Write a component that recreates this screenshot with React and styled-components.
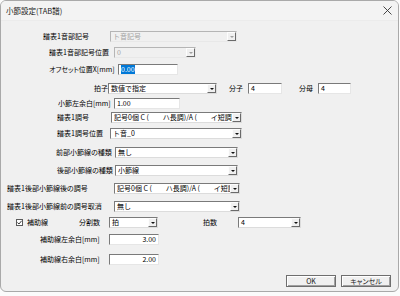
import styled, { createGlobalStyle } from "styled-components";

const GlobalStyle = createGlobalStyle`
  html, body {
    margin: 0;
    padding: 0;
    background: #fbfbfb;
  }
  body {
    font-family: "Noto Sans CJK JP", "Noto Sans", sans-serif;
  }
`;

const Window = styled.div`
  width: 397px;
  height: 290px;
  border: 1px solid #a9a9a9;
  border-radius: 6px;
  background: #f0f0f0;
  overflow: hidden;
  display: flex;
  flex-direction: column;
  font-size: 7px;
  font-feature-settings: "palt";
  color: #000;
`;

const TitleBar = styled.div`
  height: 19px;
  flex: none;
  display: flex;
  align-items: center;
  justify-content: space-between;
  padding: 0 6px 0 5px;
  background: #f3f3f3;
  border-bottom: 1px solid #ebebeb;
  color: #1a1a1a;
  font-size: 7.5px;
`;

const Client = styled.div`
  display: flex;
  flex-direction: column;
`;

const Row = styled.div`
  display: flex;
  align-items: center;
  height: 11px;
  margin-top: ${(p) => p.$gap}px;
  padding-left: ${(p) => p.$x}px;
`;

const Label = styled.span`
  flex: none;
  width: ${(p) => p.$w}px;
  margin-left: ${(p) => p.$ml || 0}px;
  white-space: nowrap;
  line-height: 11px;
`;

const Combo = styled.div`
  flex: none;
  box-sizing: border-box;
  width: ${(p) => p.$w}px;
  height: 11px;
  display: flex;
  align-items: center;
  background: ${(p) => (p.$disabled ? "#f0f0f0" : "#fff")};
  border: 1px solid;
  border-color: ${(p) =>
    p.$disabled ? "#b5b5b5 #e8e8e8 #e8e8e8 #b5b5b5" : "#7a7a7a #dcdcdc #dcdcdc #7a7a7a"};
  color: ${(p) => (p.$disabled ? "#a3a3a3" : "#000")};
`;

const ComboText = styled.span`
  flex: 1;
  overflow: hidden;
  white-space: pre;
  padding-left: 2px;
  line-height: 9px;
  font-feature-settings: normal;
`;

const DropBtn = styled.span`
  flex: none;
  box-sizing: border-box;
  width: 9px;
  height: 9px;
  display: flex;
  align-items: center;
  justify-content: center;
  background: #f0f0f0;
  border: 1px solid;
  border-color: #fdfdfd #6a6a6a #6a6a6a #fdfdfd;
  &::after {
    content: "";
    border-left: 2px solid transparent;
    border-right: 2px solid transparent;
    border-top: 2px solid ${(p) => (p.$disabled ? "#a0a0a0" : "#111")};
  }
`;

const Input = styled.div`
  flex: none;
  box-sizing: border-box;
  width: ${(p) => p.$w}px;
  height: 11px;
  padding: 0 2px;
  background: #fff;
  border: 1px solid;
  border-color: #7a7a7a #e6e6e6 #e6e6e6 #7a7a7a;
  text-align: ${(p) => p.$align || "left"};
  line-height: 9px;
  white-space: nowrap;
  overflow: hidden;
`;

const Selected = styled.span`
  background: #0078d7;
  color: #fff;
`;

const Check = styled.span`
  flex: none;
  box-sizing: border-box;
  width: 7px;
  height: 7px;
  background: #fff;
  border: 1px solid #5a5a5a;
  display: flex;
  align-items: center;
  justify-content: center;
`;

const ButtonRow = styled.div`
  display: flex;
  justify-content: flex-end;
  gap: 5px;
  margin-top: 10px;
  padding-right: 7px;
`;

const Button = styled.div`
  box-sizing: border-box;
  width: 50px;
  height: 12px;
  display: flex;
  align-items: center;
  justify-content: center;
  background: #f0f0f0;
  border: 1px solid #6e6e6e;
  box-shadow: inset 1px 1px 0 #fff, inset -1px -1px 0 #a0a0a0;
  color: #222;
`;

const CloseIcon = () => (
  <svg width="9" height="9" viewBox="0 0 9 9">
    <path d="M0.5 0.5 L8.5 8.5 M8.5 0.5 L0.5 8.5" stroke="#333" strokeWidth="0.9" />
  </svg>
);

const Drop = ({ w, text, disabled }) => (
  <Combo $w={w} $disabled={disabled}>
    <ComboText>{text}</ComboText>
    <DropBtn $disabled={disabled} />
  </Combo>
);

const KEY_SIG = "記号0個 C (　　ハ長調)/A (　　イ短調)";

export default function App() {
  return (
    <>
      <GlobalStyle />
      <Window>
        <TitleBar>
          <span>小節設定(TAB譜)</span>
          <CloseIcon />
        </TitleBar>
        <Client>
          <Row $gap={10} $x={42}>
            <Label $w={67}>譜表1音部記号</Label>
            <Drop w={127} text="ト音記号" disabled />
          </Row>
          <Row $gap={5} $x={48}>
            <Label $w={65}>譜表1音部記号位置</Label>
            <Drop w={82} text="0" disabled />
          </Row>
          <Row $gap={6} $x={48}>
            <Label $w={69}>オフセット位置X[mm]</Label>
            <Input $w={60}>
              <Selected>0.00</Selected>
            </Input>
          </Row>
          <Row $gap={8} $x={93}>
            <Label $w={14}>拍子</Label>
            <Drop w={109} text="数値で指定" />
            <Label $ml={12} $w={19}>分子</Label>
            <Input $w={34}>4</Input>
            <Label $ml={17} $w={19}>分母</Label>
            <Input $w={33}>4</Input>
          </Row>
          <Row $gap={4} $x={57}>
            <Label $w={56}>小節左余白[mm]</Label>
            <Input $w={66}>1.00</Input>
          </Row>
          <Row $gap={3} $x={56}>
            <Label $w={54}>譜表1調号</Label>
            <Drop w={131} text={KEY_SIG} />
          </Row>
          <Row $gap={5} $x={56}>
            <Label $w={53}>譜表1調号位置</Label>
            <Drop w={132} text="ト音_0" />
          </Row>
          <Row $gap={8} $x={55}>
            <Label $w={59}>前部小節線の種類</Label>
            <Drop w={123} text="無し" />
          </Row>
          <Row $gap={7} $x={56}>
            <Label $w={58}>後部小節線の種類</Label>
            <Drop w={123} text="小節線" />
          </Row>
          <Row $gap={7} $x={6}>
            <Label $w={107}>譜表1後部小節線後の調号</Label>
            <Drop w={126} text={KEY_SIG} />
          </Row>
          <Row $gap={7} $x={6}>
            <Label $w={107}>譜表1後部小節線前の調号取消</Label>
            <Drop w={126} text="無し" />
          </Row>
          <Row $gap={5} $x={15}>
            <Check>
              <svg width="5" height="5" viewBox="0 0 5 5">
                <path d="M0.4 2.5 L2 4 L4.6 0.8" fill="none" stroke="#222" strokeWidth="0.9" />
              </svg>
            </Check>
            <Label $ml={4} $w={52}>補助線</Label>
            <Label $w={30}>分割数</Label>
            <Drop w={49} text="拍" />
            <Label $ml={45} $w={35}>拍数</Label>
            <Drop w={63} text="4" />
          </Row>
          <Row $gap={6} $x={39}>
            <Label $w={69}>補助線左余白[mm]</Label>
            <Input $w={50} $align="right">3.00</Input>
          </Row>
          <Row $gap={9} $x={39}>
            <Label $w={69}>補助線右余白[mm]</Label>
            <Input $w={50} $align="right">2.00</Input>
          </Row>
          <ButtonRow>
            <Button>OK</Button>
            <Button>キャンセル</Button>
          </ButtonRow>
        </Client>
      </Window>
    </>
  );
}
